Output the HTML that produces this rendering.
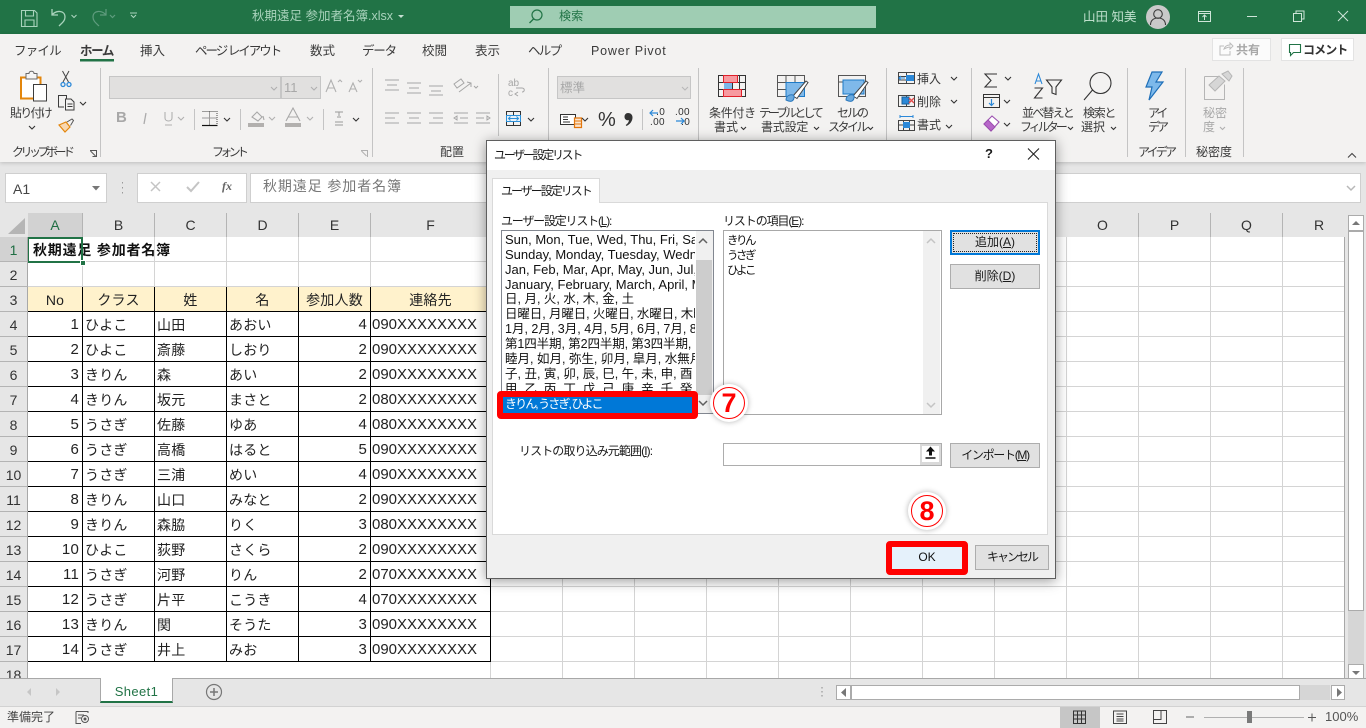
<!DOCTYPE html>
<html lang="ja"><head><meta charset="utf-8"><title>秋期遠足 参加者名簿.xlsx - Excel</title>
<style>
*{box-sizing:border-box}
html,body{margin:0;padding:0;width:1366px;height:728px;overflow:hidden;background:#e6e6e6;font-family:"Liberation Sans","Noto Sans CJK JP",sans-serif;color:#262626}
.a{position:absolute}
.t{position:absolute;white-space:nowrap;font-size:12px;line-height:16px;color:#3a3a3a;z-index:3}
.g{color:#a8a8a8}
#title{left:0;top:0;width:1366px;height:34px;background:#217346}
#ribbon{left:0;top:34px;width:1366px;height:128px;background:#f3f2f1;box-shadow:0 1px 4px rgba(0,0,0,.18)}
svg{position:absolute;left:0;top:0;overflow:visible}
#sheet{left:28px;top:237px;width:1317px;height:441px;background-color:#fff;overflow:hidden;border-right:1px solid #a8a8a8;z-index:0;
background-image:repeating-linear-gradient(to bottom,transparent 0,transparent 24px,#d4d4d4 24px,#d4d4d4 25px)}
#vlines{left:462px;top:0;width:855px;height:441px;background-image:repeating-linear-gradient(to right,#d4d4d4 0,#d4d4d4 1px,transparent 1px,transparent 72px)}
table{position:absolute;left:-1px;top:-1px;border-collapse:collapse;table-layout:fixed;width:463px;font-size:14px;color:#222}
td{height:25px;padding:2px 2px 0;border:1px solid #d4d4d4;white-space:nowrap;overflow:hidden;line-height:20px;letter-spacing:.2px}
tr.h td,tr.b td{border:1px solid #000}
tr.h td{background:#fff2cc;text-align:center}
td.n{text-align:right;padding-right:3px;font-size:15px}
td.p{font-size:15px;padding-left:1px;letter-spacing:0}
.ch{position:absolute;top:213px;height:24px;line-height:24px;text-align:center;font-size:14px;color:#333;border-right:1px solid #b4b4b4;background:#e6e6e6}
.rh{position:absolute;left:0;width:28px;height:25px;line-height:27px;text-align:center;font-size:14px;color:#333;border-bottom:1px solid #b4b4b4;border-right:1px solid #a8a8a8;background:#e6e6e6}
#dlg{left:486px;top:140px;width:570px;height:439px;background:#f0f0f0;border:1px solid #5f5f5f;box-shadow:0 2px 12px rgba(0,0,0,.4);z-index:5}
#dlg .t{color:#1a1a1a}
.box{position:absolute;background:#fff;border:1px solid #a0a0a0}
.btn{position:absolute;background:#e1e1e1;border:1px solid #adadad;font-size:12px;text-align:center;color:#1a1a1a;white-space:nowrap}
u{text-decoration:underline}
.li{position:absolute;left:3px;white-space:nowrap;font-size:13px;line-height:15px;height:15px;color:#111}
.num{position:absolute;width:38px;height:38px;border-radius:50%;background:#fff;box-shadow:0 0 6px rgba(0,0,0,.3);z-index:8}
.num b{position:absolute;left:3px;top:3px;width:32px;height:32px;border-radius:50%;border:1.5px solid #f00;color:#f00;text-align:center;font:bold 27px/30px "Liberation Sans",sans-serif}
</style></head><body>

<div class="a" id="title"></div>
<div class="a" id="ribbon"></div>

<svg width="1366" height="170" fill="none" style="z-index:1">
 <!-- title bar icons -->
 <g stroke="#a9d3bc" stroke-width="1.1">
  <path d="M21.5 10.5h13l2.500 2.500v13.500h-15.500zM25.500 10.500v5.500h8v-5.500M25 26.500v-6.500h9v6.500"/>
  <path d="M52 9v6h6M52 15c4-5 13-5 13 2c0 4-3 6-6 9" stroke-width="1.300"/>
  <path d="M71.500 15l2.500 2.500l2.500-2.500M131 15l2.500 2.500l2.500-2.500M130 13h7"/>
 </g>
 <g stroke="#5f9c7e" stroke-width="1.200"><path d="M106 9v6h-6M106 15c-4-5-13-5-13 2c0 4 3 6 6 9"/><path d="M110 15l2.500 2.500l2.500-2.500"/></g>
 <path d="M398 15h6l-3 3z" fill="#c6e0d2"/>
 <circle cx="1158" cy="17" r="12" fill="#c9c9c9"/>
 <circle cx="1158" cy="14" r="4.300" stroke="#3c3c3c" stroke-width="1.100"/><path d="M1150.500 25c0-5 3.500-7 7.500-7s7.500 2 7.500 7" stroke="#3c3c3c" stroke-width="1.100"/>
 <g stroke="#cfe5d9" stroke-width="1">
  <path d="M1198.500 11.500h12v10h-12zM1198.500 13.500h12M1204.500 20v-5M1202.500 17l2-2l2 2"/>
  <path d="M1247 16.500h10"/>
  <path d="M1293.500 13.500h8v8h-8zM1296 13.500v-2.500h8v8h-2.500"/>
  <path d="M1338 11l10 10M1348 11l-10 10"/>
 </g>
 <!-- group separators -->
 <g stroke="#c4c4c4">
  <path d="M100.500 68v89M372.500 68v89M548.500 68v89M698.500 68v89M886.500 68v89M971.500 68v89M1127.500 68v89M1185.500 68v89M1243.500 68v89"/>
  <path d="M498.500 74v62M194.500 109v21M240.500 109v21M323.500 109v21M642.500 109v21"/>
 </g>
 <path d="M80 59h34v2.500h-34z" fill="#217346"/>
 <!-- clipboard -->
 <path d="M21 77.500h19.500v21h-19.500z" fill="#fff" stroke="#e3860c" stroke-width="2"/>
 <path d="M26 76v-2.500h3c0-3 5-3 5 0h3v5.500h-11z" fill="#f5f5f5" stroke="#6a6a6a"/>
 <path d="M33.500 84.500h13v16.500h-13z" fill="#fff" stroke="#3c3c3c"/>
 <!-- scissors -->
 <g stroke="#444"><path d="M62.500 71l6 11M69 71l-6 11"/></g><circle cx="63" cy="84.500" r="2" stroke="#2b88d8" stroke-width="1.300"/><circle cx="69" cy="84.500" r="2" stroke="#2b88d8" stroke-width="1.300"/>
 <!-- copy -->
 <path d="M64 107h-5.500v-11.500h8v3M65.500 99h5.500l3 3v8h-8.500zM67.500 104h5M67.500 106.500h5" stroke="#3c3c3c"/>
 <!-- painter -->
 <path d="M59 125l7-3l4 5l-5 5z" fill="#f8d7b0" stroke="#e3860c" stroke-width="1.200"/><path d="M67 122l5-3l1.500 1.500l-3 5" stroke="#555"/>
 <!-- font boxes -->
 <path d="M109.500 76.500h171v22h-171zM281.500 76.500h39v22h-39z" fill="#e1e0df" stroke="#c6c6c6"/>
 <g stroke="#b0b0b0" stroke-width="1.100">
  <path d="M271 87l3 3l3-3M311 87l3 3l3-3M178 117l3 3l3-3M269 117l3 3l3-3M307 117l3 3l3-3"/>
  <path d="M326 92l5-12l5 12M328 88h6M338 82l2-2l2 2M349 92l4-9l4 9M350.500 89h5M358 80l2 2l2-2"/>
  <path d="M165 112v6c0 4 7 4 7 0v-6M165 125h7"/>
 </g>
 <path d="M144 124l2-11" stroke="#ababab" stroke-width="1.300"/>
 <!-- borders -->
 <path d="M202.500 111.500h14.500v14h-14.500M209.500 111.500v13M202.500 118h14.500" stroke="#444" stroke-dasharray="1 1"/><path d="M202 125.500h15.500" stroke="#111" stroke-width="1.200"/>
 <path d="M224 118l3 3l3-3M353 118l3 3l3-3" stroke="#333" stroke-width="1.100"/>
 <path d="M248 123h16v4h-16zM285 123h16v4h-16z" fill="#b2b0ae"/>
 <path d="M252 117l5-5l5 5l-4 4zM263 116l1 4M286 121l7-13l7 13M288 117h10" stroke="#a8a8a8" stroke-width="1.100"/>
 <path d="M335 112h8M339 112v4M337 117h4M335 122h8M335 125h8" stroke="#999"/>
 <!-- align -->
 <g stroke="#a6a6a6"><path d="M385 80h14M387 85h10M385 90h14M407 83h14M409 88h10M407 93h14M429 86h14M431 91h10M429 95h14"/>
  <path d="M385 113h14M385 118h10M385 123h14M407 113h14M409 118h10M407 123h14M429 113h14M433 118h10M429 123h14"/>
  <path d="M454 113h14M460 118h8M454 123h14M454 118l3-2v4zM476 113h14M476 118h8M476 123h14M490 118l-3-2v4z"/>
  <path d="M454 84l7-5l3 4l-7 5zM459 92l12-9M467 82l4 1v4M474 86l2 2l2-2"/>
 </g>
 <!-- wrap, merge -->
 <path d="M522 92c3 0 3-4 0-4h-6M518 96l-3-2l3-2" stroke="#a6a6a6"/>
 <text x="508" y="86" font-size="10" fill="#a6a6a6" font-family="Liberation Sans">ab</text>
 <text x="508" y="96" font-size="10" fill="#a6a6a6" font-family="Liberation Sans">c</text>
 <path d="M506.500 111.500h14v14h-14zM513.500 111.500v4M513.500 121.500v4" stroke="#333"/><path d="M506.500 115.500h14v6h-14z" fill="#e7f2fb" stroke="#2b8fd8"/>
 <path d="M508.500 118.500h10M510.500 116.500l-2 2l2 2M516.500 116.500l2 2l-2 2" stroke="#2b8fd8"/>
 <path d="M528 118l3 3l3-3" stroke="#333" stroke-width="1.100"/>
 <!-- number -->
 <path d="M557.500 76.500h133v22h-133z" fill="#e1e0df" stroke="#c6c6c6"/>
 <path d="M682 87l3 3l3-3" stroke="#b8b8b8" stroke-width="1.100"/>
 <path d="M560.500 114.500h15v10h-15z" fill="#fff" stroke="#333"/><path d="M563 117h5M563 119.500h5M563 122h7" stroke="#333"/>
 <path d="M574.500 118h7v9.500h-7z" fill="#fbe5cf" stroke="#e3760c" stroke-width="1.200"/><path d="M574.500 121h7M574.500 124h7" stroke="#e3760c"/>
 <path d="M582 118l3 3l3-3" stroke="#333" stroke-width="1.100"/>
 <path d="M628 113c3 0 4.500 2 4.500 4.500c0 4-3 7-6 8.500l-.8-1c2-1.200 3-3 3.300-4.800c-2.500.5-4.500-1-4.500-3.500c0-2 1.500-3.700 3.500-3.700z" fill="#333"/>
 <!-- conditional format -->
 <path d="M718.500 75.500h27v21h-27zM718.500 82.500h27M718.500 89.500h27M725.500 75.500v21M732.500 75.500v21M739.500 75.500v21" stroke="#333"/>
 <path d="M723.500 75.500h14v7h-14zM723.500 89.500h18v7h-18z" fill="#f79aa0" stroke="#e0202a"/><path d="M724 83h8v6h-8z" fill="#7bb7e8"/>
 <!-- table format -->
 <path d="M777.500 75.500h27v21h-27zM777.500 82.500h27M777.500 89.500h27M786 75.500v21M795 75.500v21" stroke="#555"/>
 <path d="M786 82.500h18.500v14h-18.500z" fill="#7fb9ea" stroke="#1e7bc8"/>
 <path d="M793 96l13-15l2 1.500l-11 16z" fill="#fff" stroke="#444"/><path d="M786 100c0-4 4-6 7-5c2 1 1 5-1 6c-2 1-4 0-6-1z" fill="#6aa9de" stroke="#2b79be"/>
 <!-- cell styles -->
 <path d="M838.500 75.500h27v21h-27zM838.500 82h27" stroke="#555"/>
 <path d="M843 80h21v14h-21z" fill="#7fb9ea" stroke="#1e7bc8"/>
 <path d="M853 96l13-15l2 1.500l-11 16z" fill="#fff" stroke="#444"/><path d="M846 100c0-4 4-6 7-5c2 1 1 5-1 6c-2 1-4 0-6-1z" fill="#6aa9de" stroke="#2b79be"/>
 <!-- insert/delete/format -->
 <path d="M898.500 72.500h16v11h-16zM906.500 72.500v11M898.500 76.500h16M898.500 80h16" stroke="#444"/><path d="M906 75h8v6h-8z" fill="#2b88d8"/><path d="M899 78h6M901 76l-2 2l2 2" stroke="#2b88d8"/>
 <path d="M898.500 95.500h16v11h-16zM906.500 95.500v11" stroke="#444"/><path d="M902 97h7v7h-7z" fill="#2b88d8" stroke="#1a5f99"/><path d="M909 98l5 5M914 98l-5 5" stroke="#e34a4a" stroke-width="1.300"/>
 <path d="M898.500 120.500h16v10h-16zM903.500 120.500v10M909.500 120.500v10M898.500 125h16" stroke="#444"/><path d="M903 122h7v6h-7z" fill="#2b88d8"/><path d="M900 116.500h13M900 115v3M913 115v3" stroke="#2b88d8"/>
 <path d="M951 77l3 3l3-3M951 100l3 3l3-3M946 125l3 3l3-3" stroke="#333" stroke-width="1.100"/>
 <!-- label chevrons -->
 <path d="M741 127l2.500 2.500l2.500-2.500M814 127l2.500 2.500l2.500-2.500M868 127l2.500 2.500l2.500-2.500M1068 127l2.500 2.500l2.500-2.500M1111 127l2.500 2.500l2.500-2.500" stroke="#333" stroke-width="1.100"/>
 <path d="M1220 127l2.500 2.500l2.500-2.500" stroke="#b0b0b0" stroke-width="1.100"/>
 <!-- sum etc -->
 <path d="M997 74h-12l6 6.500l-6 6.500h12" stroke="#333" stroke-width="1.100"/>
 <path d="M1005 77l3 3l3-3M1004 100l3 3l3-3M1004 123l3 3l3-3" stroke="#333" stroke-width="1.100"/>
 <path d="M983.500 94.500h16v13h-16zM983.500 97.500h16" stroke="#333"/><path d="M991.500 99v6M989 103l2.500 2.500l2.500-2.500" stroke="#2b88d8" stroke-width="1.200"/>
 <path d="M984 124l8-8l7 6l-8 9z" fill="#fff" stroke="#9c4fb0" stroke-width="1.100"/><path d="M984 124l4-4l7 7l-4 4z" fill="#b767c9" stroke="#9c4fb0"/>
 <!-- sort -->
 <path d="M1035 84l3.500-10l3.500 10M1036 81h5" stroke="#2b88d8" stroke-width="1.100"/>
 <path d="M1034.500 88h8l-8 10h8" stroke="#333" stroke-width="1.100"/><path d="M1046.500 80h15l-5.500 7v7.500l-4-1.500v-6z" stroke="#333" stroke-width="1.100"/>
 <!-- find -->
 <circle cx="1100.500" cy="83" r="10.500" stroke="#333" stroke-width="1.100"/><path d="M1092.500 90l-8.500 10" stroke="#333" stroke-width="1.100"/>
 <!-- ideas -->
 <path d="M1152 72h10l-6 10h7l-14 18l3-13h-6z" fill="#7db9eb" stroke="#1e6fb8" stroke-width="1.200"/>
 <!-- sensitivity -->
 <path d="M1204.500 76.500h14M1204.500 76.500v23h20v-15" stroke="#b5b5b5"/><path d="M1209 85l10-9l6 5l-10 10zM1222 74l6-3l4 5l-3 5z" fill="#d6d6d6" stroke="#b5b5b5"/>
 <!-- launcher/collapse -->
 <path d="M90 150.500h6.500v6.500M90.500 151l5 5M92.500 156.500h4" stroke="#555"/>
 <path d="M361 150.500h6.500v6.500M361.500 151l5 5" stroke="#b0b0b0"/>
 <path d="M1348 157.500l4-4l4 4" stroke="#444" stroke-width="1.100"/>
 <!-- share/comment -->
 <path d="M1212.500 38.500h58v22h-58z" fill="#fbfbfb" stroke="#e3e3e3"/>
 <path d="M1281.500 38.500h72v22h-72z" fill="#fff" stroke="#e3e3e3"/>
 <path d="M1224 46h-4v9h10v-4M1224 49c1-3 3-4 6-4v-2l3 3l-3 3v-2c-2 0-4 1-6 2z" stroke="#bcbcbc"/>
 <path d="M1289.500 44.500h11v8h-7l-3 3v-3h-1z" stroke="#217346" stroke-width="1.100"/>
</svg>

<div class="t" style="left:252px;top:8px;color:#a9d3bc;font-size:12.500px">秋期遠足 参加者名簿.xlsx</div>
<div class="a" style="left:510px;top:6px;width:366px;height:22px;background:#9fcdb3"></div>
<div class="t" style="left:559px;top:8px;color:#217346;font-size:12px;letter-spacing:.2px">検索</div>
<div class="t" style="left:1083px;top:9px;color:#bfe0cd;font-size:12.500px">山田 知美</div>

<svg width="1366" height="34" fill="none" style="z-index:2"><circle cx="537" cy="15" r="5" stroke="#217346" stroke-width="1.200"/><path d="M533.500 19l-4 4" stroke="#217346" stroke-width="1.300"/></svg>

<!-- tabs -->
<div class="t" style="left:14px;top:43px;letter-spacing:-.8px;font-size:12.500px">ファイル</div>
<div class="t" style="left:80px;top:43px;font-weight:bold;letter-spacing:-1.400px;font-size:12.500px">ホーム</div>
<div class="t" style="left:140px;top:43px;font-size:12.500px">挿入</div>
<div class="t" style="left:195px;top:43px;letter-spacing:-2px;font-size:12.500px">ページ レイアウト</div>
<div class="t" style="left:310px;top:43px;font-size:12.500px">数式</div>
<div class="t" style="left:362px;top:43px;letter-spacing:-1.200px;font-size:12.500px">データ</div>
<div class="t" style="left:422px;top:43px;font-size:12.500px">校閲</div>
<div class="t" style="left:475px;top:43px;font-size:12.500px">表示</div>
<div class="t" style="left:528px;top:43px;letter-spacing:-1.700px;font-size:12.500px">ヘルプ</div>
<div class="t" style="left:591px;top:43px;font-size:12.500px;letter-spacing:.8px">Power Pivot</div>
<div class="t g" style="left:1236px;top:42px;font-weight:bold;font-size:12px">共有</div>
<div class="t" style="left:1303px;top:42px;font-weight:bold;letter-spacing:-.9px;font-size:12px;color:#333">コメント</div>

<!-- ribbon labels -->
<div class="t" style="left:10px;top:105px;letter-spacing:-1.800px">貼り付け</div>
<div class="t g" style="left:116px;top:110px;font-size:15px;font-weight:bold">B</div>
<div class="t g" style="left:284px;top:80px;font-size:13px">11</div>
<div class="t g" style="left:560px;top:80px;font-size:12.500px">標準</div>
<div class="t" style="left:598px;top:110px;font-size:20px;line-height:20px;color:#333">%</div>
<div class="t" style="left:709px;top:105px;letter-spacing:-.3px">条件付き</div>
<div class="t" style="left:714px;top:119px">書式</div>
<div class="t" style="left:759px;top:105px;letter-spacing:-3px;">テーブルとして</div>
<div class="t" style="left:761px;top:119px;letter-spacing:-.2px">書式設定</div>
<div class="t" style="left:837px;top:105px;letter-spacing:-2px">セルの</div>
<div class="t" style="left:828px;top:119px;letter-spacing:-2.500px">スタイル</div>
<div class="t" style="left:917px;top:71px">挿入</div>
<div class="t" style="left:917px;top:94px">削除</div>
<div class="t" style="left:917px;top:117px">書式</div>
<div class="t" style="left:1022px;top:105px;letter-spacing:-1.800px">並べ替えと</div>
<div class="t" style="left:1020px;top:119px;letter-spacing:-3px">フィルター</div>
<div class="t" style="left:1083px;top:105px;letter-spacing:-1.300px">検索と</div>
<div class="t" style="left:1081px;top:119px">選択</div>
<div class="t" style="left:1148px;top:105px;letter-spacing:-3px">アイ</div>
<div class="t" style="left:1148px;top:119px;letter-spacing:-3px">デア</div>
<div class="t g" style="left:1203px;top:105px">秘密</div>
<div class="t g" style="left:1203px;top:119px">度</div>
<div class="t" style="left:12px;top:144px;letter-spacing:-3.500px;font-size:12px">クリップボード</div>
<div class="t" style="left:212px;top:144px;letter-spacing:-3.700px">フォント</div>
<div class="t" style="left:440px;top:144px">配置</div>
<div class="t" style="left:1138px;top:144px;letter-spacing:-2.800px">アイデア</div>
<div class="t" style="left:1196px;top:144px">秘密度</div>
<div class="t" style="left:650px;top:108px;font-size:10px;line-height:10px;color:#333;letter-spacing:.3px">&nbsp; .0<br>.00</div>
<div class="t" style="left:675px;top:108px;font-size:10px;line-height:10px;color:#333;letter-spacing:.3px">.00<br>&nbsp; .0</div>
<svg width="1366" height="170" fill="none" style="z-index:2"><path d="M650 113h8M653 110l-3 3l3 3M676 121h8M681 118l3 3l-3 3" stroke="#2b88d8" stroke-width="1.200"/><path d="M29 126l3 3l3-3" stroke="#333" stroke-width="1.100"/><path d="M80 102l3 3l3-3" stroke="#333" stroke-width="1.100"/></svg>

<!-- formula bar -->
<div class="a" style="left:5px;top:173px;width:102px;height:30px;background:#fff;border:1px solid #cfcfcf"></div>
<div class="t" style="left:13px;top:181px;font-size:14px;color:#444">A1</div>
<div class="a" style="left:137px;top:173px;width:110px;height:30px;background:#fff;border:1px solid #cfcfcf"></div>
<div class="a" style="left:250px;top:173px;width:1111px;height:30px;background:#fff;border:1px solid #cfcfcf"></div>
<div class="t" style="left:263px;top:178px;font-size:14px;color:#777;letter-spacing:.9px">秋期遠足 参加者名簿</div>
<div class="t" style="left:222px;top:178px;font:italic bold 12px/16px 'Liberation Serif',serif;color:#666">fx</div>
<svg width="1366" height="230" fill="none" style="z-index:2">
 <path d="M92 186h8l-4 4.500z" fill="#777"/>
 <path d="M122.500 182v1.500M122.500 187v1.500M122.500 192v1.500" stroke="#999"/>
 <path d="M151 182l9 9M160 182l-9 9" stroke="#c4c4c4" stroke-width="1.500"/>
 <path d="M187 187l4 4l8-9" stroke="#c4c4c4" stroke-width="2"/>
 <path d="M1347 186l4 4l4-4" stroke="#b8b8b8" stroke-width="1.500"/>
 <path d="M25 218v16h-17z" fill="#b5b5b5"/>
</svg>

<!-- column headers -->
<div class="a" style="left:0;top:213px;width:1345px;height:24px;background:#e6e6e6"></div>
<div class="ch" style="left:28px;width:55px;background:#d2d2d2;color:#1f6e43">A</div>
<div class="ch" style="left:83px;width:72px">B</div>
<div class="ch" style="left:155px;width:72px">C</div>
<div class="ch" style="left:227px;width:72px">D</div>
<div class="ch" style="left:299px;width:72px">E</div>
<div class="ch" style="left:371px;width:120px">F</div>
<div class="ch" style="left:1067px;width:72px">O</div>
<div class="ch" style="left:1139px;width:72px">P</div>
<div class="ch" style="left:1211px;width:72px">Q</div>
<div class="ch" style="left:1283px;width:62px;border-right:0;padding-right:0;text-indent:10px">R</div>

<!-- row headers -->
<div class="rh" style="top:237px;background:#d2d2d2;color:#1f6e43">1</div>
<div class="rh" style="top:262px">2</div><div class="rh" style="top:287px">3</div><div class="rh" style="top:312px">4</div><div class="rh" style="top:337px">5</div><div class="rh" style="top:362px">6</div><div class="rh" style="top:387px">7</div><div class="rh" style="top:412px">8</div><div class="rh" style="top:437px">9</div><div class="rh" style="top:462px">10</div><div class="rh" style="top:487px">11</div><div class="rh" style="top:512px">12</div><div class="rh" style="top:537px">13</div><div class="rh" style="top:562px">14</div><div class="rh" style="top:587px">15</div><div class="rh" style="top:612px">16</div><div class="rh" style="top:637px">17</div><div class="rh" style="top:662px">18</div>

<!-- sheet -->
<div class="a" id="sheet">
 <div class="a" id="vlines"></div>
 <table>
  <colgroup><col style="width:55px"><col style="width:72px"><col style="width:72px"><col style="width:72px"><col style="width:72px"><col style="width:120px"></colgroup>
  <tr><td style="border-right-color:transparent"></td><td></td><td></td><td></td><td></td><td></td></tr>
  <tr><td></td><td></td><td></td><td></td><td></td><td></td></tr>
  <tr class="h"><td>No</td><td>クラス</td><td>姓</td><td>名</td><td>参加人数</td><td>連絡先</td></tr>
  <tr class="b"><td class="n">1</td><td>ひよこ</td><td>山田</td><td>あおい</td><td class="n">4</td><td class="p">090XXXXXXXX</td></tr>
  <tr class="b"><td class="n">2</td><td>ひよこ</td><td>斎藤</td><td>しおり</td><td class="n">2</td><td class="p">090XXXXXXXX</td></tr>
  <tr class="b"><td class="n">3</td><td>きりん</td><td>森</td><td>あい</td><td class="n">2</td><td class="p">090XXXXXXXX</td></tr>
  <tr class="b"><td class="n">4</td><td>きりん</td><td>坂元</td><td>まさと</td><td class="n">2</td><td class="p">080XXXXXXXX</td></tr>
  <tr class="b"><td class="n">5</td><td>うさぎ</td><td>佐藤</td><td>ゆあ</td><td class="n">4</td><td class="p">080XXXXXXXX</td></tr>
  <tr class="b"><td class="n">6</td><td>うさぎ</td><td>高橋</td><td>はると</td><td class="n">5</td><td class="p">090XXXXXXXX</td></tr>
  <tr class="b"><td class="n">7</td><td>うさぎ</td><td>三浦</td><td>めい</td><td class="n">4</td><td class="p">090XXXXXXXX</td></tr>
  <tr class="b"><td class="n">8</td><td>きりん</td><td>山口</td><td>みなと</td><td class="n">2</td><td class="p">090XXXXXXXX</td></tr>
  <tr class="b"><td class="n">9</td><td>きりん</td><td>森脇</td><td>りく</td><td class="n">3</td><td class="p">080XXXXXXXX</td></tr>
  <tr class="b"><td class="n">10</td><td>ひよこ</td><td>荻野</td><td>さくら</td><td class="n">2</td><td class="p">090XXXXXXXX</td></tr>
  <tr class="b"><td class="n">11</td><td>うさぎ</td><td>河野</td><td>りん</td><td class="n">2</td><td class="p">070XXXXXXXX</td></tr>
  <tr class="b"><td class="n">12</td><td>うさぎ</td><td>片平</td><td>こうき</td><td class="n">4</td><td class="p">070XXXXXXXX</td></tr>
  <tr class="b"><td class="n">13</td><td>きりん</td><td>関</td><td>そうた</td><td class="n">3</td><td class="p">090XXXXXXXX</td></tr>
  <tr class="b"><td class="n">14</td><td>うさぎ</td><td>井上</td><td>みお</td><td class="n">3</td><td class="p">090XXXXXXXX</td></tr>
 </table>
 <div class="t" style="left:5px;top:4px;font-size:14px;font-weight:bold;color:#111;line-height:18px;letter-spacing:.8px;z-index:0">秋期遠足 参加者名簿</div>
 <div class="a" style="left:-1px;top:0;width:56px;height:26px;border:2px solid #217346"></div>
 <div class="a" style="left:52px;top:23px;width:6px;height:6px;background:#217346;border:1px solid #fff"></div>
</div>

<!-- vertical scrollbar -->
<div class="a" style="left:1348px;top:215px;width:16px;height:16px;background:#fff;border:1px solid #ababab"></div>
<div class="a" style="left:1348px;top:231px;width:16px;height:380px;background:#fff;border:1px solid #ababab"></div>
<div class="a" style="left:1348px;top:611px;width:16px;height:53px;background:#d6d6d6"></div>
<div class="a" style="left:1348px;top:664px;width:16px;height:15px;background:#fff;border:1px solid #ababab"></div>
<svg width="1366" height="728" fill="none" style="z-index:2"><path d="M1352 225h8l-4-4z" fill="#777"/><path d="M1352 671h8l-4 4z" fill="#777"/></svg>

<!-- sheet tabs -->
<div class="a" style="left:0;top:678px;width:1366px;height:28px;background:#e6e6e6;border-top:1px solid #a8a8a8"></div>
<div class="a" style="left:100px;top:678px;width:73px;height:25px;background:#fff;border:1px solid #a8a8a8;border-top:0;border-bottom:2px solid #217346;text-align:center;color:#217346;font-size:13px;line-height:27px;letter-spacing:.4px">Sheet1</div>
<svg width="1366" height="728" fill="none" style="z-index:2">
 <path d="M31 688l-4 4l4 4z" fill="#c6c6c6"/><path d="M56 688l4 4l-4 4z" fill="#c6c6c6"/>
 <circle cx="214" cy="692" r="7.500" stroke="#777" stroke-width="1.200"/><path d="M210 692h8M214 688v8" stroke="#777" stroke-width="1.500"/>
 <path d="M822 687v1.500M822 691v1.500M822 695v1.500" stroke="#888"/>
 <path d="M836.500 685.500h14v14h-14z" fill="#fff" stroke="#ababab"/><path d="M846 688l-5 4.500l5 4.500z" fill="#777"/>
 <path d="M851.500 685.500h448v14h-448z" fill="#fff" stroke="#ababab"/>
 <path d="M1300 685h30v15h-30z" fill="#d6d6d6"/>
 <path d="M1331.500 685.500h13v14h-13z" fill="#fff" stroke="#ababab"/><path d="M1337 688l5 4.500l-5 4.500z" fill="#777"/>
</svg>

<!-- status bar -->
<div class="a" style="left:0;top:706px;width:1366px;height:22px;background:#f3f2f1;border-top:1px solid #d2d2d2"></div>
<div class="t" style="left:7px;top:709px;color:#444;font-size:12px">準備完了</div>
<div class="a" style="left:1060px;top:707px;width:40px;height:21px;background:#c6c6c6"></div>
<svg width="1366" height="728" fill="none" style="z-index:2">
 <path d="M76 711.500h12v1.500M76 711.500v12h5M78 715h6M78 718h3" stroke="#555"/><circle cx="85" cy="719" r="3.500" stroke="#555"/><circle cx="85" cy="719" r="1.500" fill="#555"/>
 <path d="M1073.500 711h12v12.500h-12zM1077.500 711v12.500M1081.500 711v12.500M1073.500 715h12M1073.500 719h12" stroke="#333"/>
 <path d="M1113.500 711h13v12.500h-13zM1116.500 714h7M1116.500 716.500h7M1116.500 719h7M1116.500 721h7" stroke="#444"/>
 <path d="M1153.500 710.500h13v13h-13zM1153.500 719.500h7.500v-9" stroke="#444"/>
 <path d="M1186 717h8" stroke="#666"/><path d="M1204 717.500h100" stroke="#b0b0b0"/>
 <path d="M1247 711h5v12h-5z" fill="#7a7a7a"/>
 <path d="M1304 717.500h8M1308 713.500v8" stroke="#555" transform="translate(4 0)"/>
</svg>
<div class="t" style="left:1325px;top:709px;font-size:13px;color:#555">100%</div>

<!-- dialog -->
<div class="a" id="dlg">
 <div class="a" style="left:0;top:0;width:568px;height:29px;background:#fff"></div>
 <div class="t" style="left:7px;top:6px;letter-spacing:-2.300px">ユーザー設定リスト</div>
 <div class="t" style="left:498px;top:5px;font-weight:bold;font-size:13px">?</div>
 <svg width="568" height="30" fill="none"><path d="M541 7.500l11 11M552 7.500l-11 11" stroke="#222" stroke-width="1.100"/></svg>

 <div class="a" style="left:5px;top:61px;width:556px;height:333px;background:#fff;border:1px solid #d9d9d9"></div>
 <div class="a" style="left:5px;top:37px;width:108px;height:25px;background:#fff;border:1px solid #d9d9d9;border-bottom:0"></div>
 <div class="t" style="left:14px;top:42px;letter-spacing:-2px">ユーザー設定リスト</div>

 <div class="t" style="left:14px;top:72px;letter-spacing:-1.200px">ユーザー設定リスト(<u>L</u>):</div>
 <div class="t" style="left:236px;top:72px;letter-spacing:-1.100px">リストの項目(<u>E</u>):</div>

 <div class="box" style="left:14px;top:89px;width:213px;height:184px;border-color:#828790;overflow:hidden">
  <div class="a" style="left:0;top:0;width:193px;height:183px;overflow:hidden">
   <div class="li" style="top:1px">Sun, Mon, Tue, Wed, Thu, Fri, Sat</div>
   <div class="li" style="top:16px">Sunday, Monday, Tuesday, Wednesday</div>
   <div class="li" style="top:31px">Jan, Feb, Mar, Apr, May, Jun, Jul, Aug</div>
   <div class="li" style="top:46px">January, February, March, April, May</div>
   <div class="li" style="top:61px;font-size:12.500px">日, 月, 火, 水, 木, 金, 土</div>
   <div class="li" style="top:76px;font-size:12.500px;letter-spacing:-.1px">日曜日, 月曜日, 火曜日, 水曜日, 木曜日</div>
   <div class="li" style="top:91px;font-size:12.500px">1月, 2月, 3月, 4月, 5月, 6月, 7月, 8月</div>
   <div class="li" style="top:106px;font-size:12.500px;letter-spacing:-.1px">第1四半期, 第2四半期, 第3四半期, 第4四半期</div>
   <div class="li" style="top:121px;font-size:12.500px">睦月, 如月, 弥生, 卯月, 皐月, 水無月</div>
   <div class="li" style="top:136px;font-size:12.500px">子, 丑, 寅, 卯, 辰, 巳, 午, 未, 申, 酉</div>
   <div class="li" style="top:151px;font-size:12.500px">甲, 乙, 丙, 丁, 戊, 己, 庚, 辛, 壬, 癸</div>
  </div>
  <div class="a" style="left:194px;top:0;width:17px;height:183px;background:#f0f0f0"></div>
  <div class="a" style="left:194px;top:29px;width:16px;height:135px;background:#cdcdcd"></div>
 </div>
 <svg width="568" height="300" fill="none" style="z-index:1"><path d="M212 102l4-4l4 4" stroke="#606060" stroke-width="1.500"/><path d="M212 260l4 4l4-4" stroke="#606060" stroke-width="1.500"/></svg>
 <div class="a" style="left:10px;top:250px;width:201px;height:28px;border:6.500px solid #f00;border-radius:4px;background:#0078d7;z-index:2"></div>
 <div class="t" style="left:18px;top:255px;z-index:3;letter-spacing:-1.900px;font-size:12px;color:#fff" id="sel">きりん, うさぎ, ひよこ</div>

 <div class="box" style="left:236px;top:89px;width:219px;height:185px;border-color:#a8a8a8;overflow:hidden">
  <div class="li" style="top:3px;left:3px;letter-spacing:-2.500px;font-size:11.500px">きりん</div>
  <div class="li" style="top:18px;left:3px;letter-spacing:-2.500px;font-size:11.500px">うさぎ</div>
  <div class="li" style="top:33px;left:3px;letter-spacing:-2.500px;font-size:11.500px">ひよこ</div>
  <div class="a" style="left:199px;top:0;width:17px;height:183px;background:#f0f0f0"></div>
 </div>
 <svg width="568" height="300" fill="none" style="z-index:1"><path d="M440 102l4-4l4 4" stroke="#c4c4c4" stroke-width="1.500"/><path d="M440 262l4 4l4-4" stroke="#c4c4c4" stroke-width="1.500"/></svg>

 <div class="btn" style="left:463px;top:89px;width:90px;height:25px;border:2px solid #0078d7;line-height:21px"><span style="position:absolute;left:1px;top:1px;right:1px;bottom:1px;border:1px dotted #222"></span>追加(<u>A</u>)</div>
 <div class="btn" style="left:463px;top:123px;width:90px;height:25px;line-height:23px">削除(<u>D</u>)</div>

 <div class="t" style="left:32px;top:302px;letter-spacing:-.9px">リストの取り込み元範囲(<u>I</u>):</div>
 <div class="box" style="left:236px;top:302px;width:219px;height:23px;border-color:#adadad"></div>
 <div class="a" style="left:433px;top:303px;width:21px;height:21px;background:#d9d9d9;border:2px solid #d9d9d9"></div>
 <div class="a" style="left:435px;top:305px;width:17px;height:16px;background:#fff"></div>
 <svg width="568" height="340" fill="none" style="z-index:1"><path d="M443.500 305.500l4.500 5h-3v4h-3v-4h-3z" fill="#111"/><path d="M438.500 317h10" stroke="#111" stroke-width="1.500"/></svg>
 <div class="btn" style="left:463px;top:302px;width:90px;height:25px;line-height:23px;letter-spacing:-1.300px">インポート(<u>M</u>)</div>

 <div class="a" style="left:399px;top:400px;width:82px;height:34px;border:6.500px solid #f00;border-radius:4px;background:#e5f1fb;z-index:2;text-align:center;font-size:12px;line-height:21px;color:#111">OK</div>
 <div class="btn" style="left:488px;top:404px;width:74px;height:25px;line-height:23px;letter-spacing:-2px">キャンセル</div>
</div>

<div class="num" style="left:710px;top:384px"><b>7</b></div>
<div class="num" style="left:908px;top:492px"><b>8</b></div>

</body></html>
